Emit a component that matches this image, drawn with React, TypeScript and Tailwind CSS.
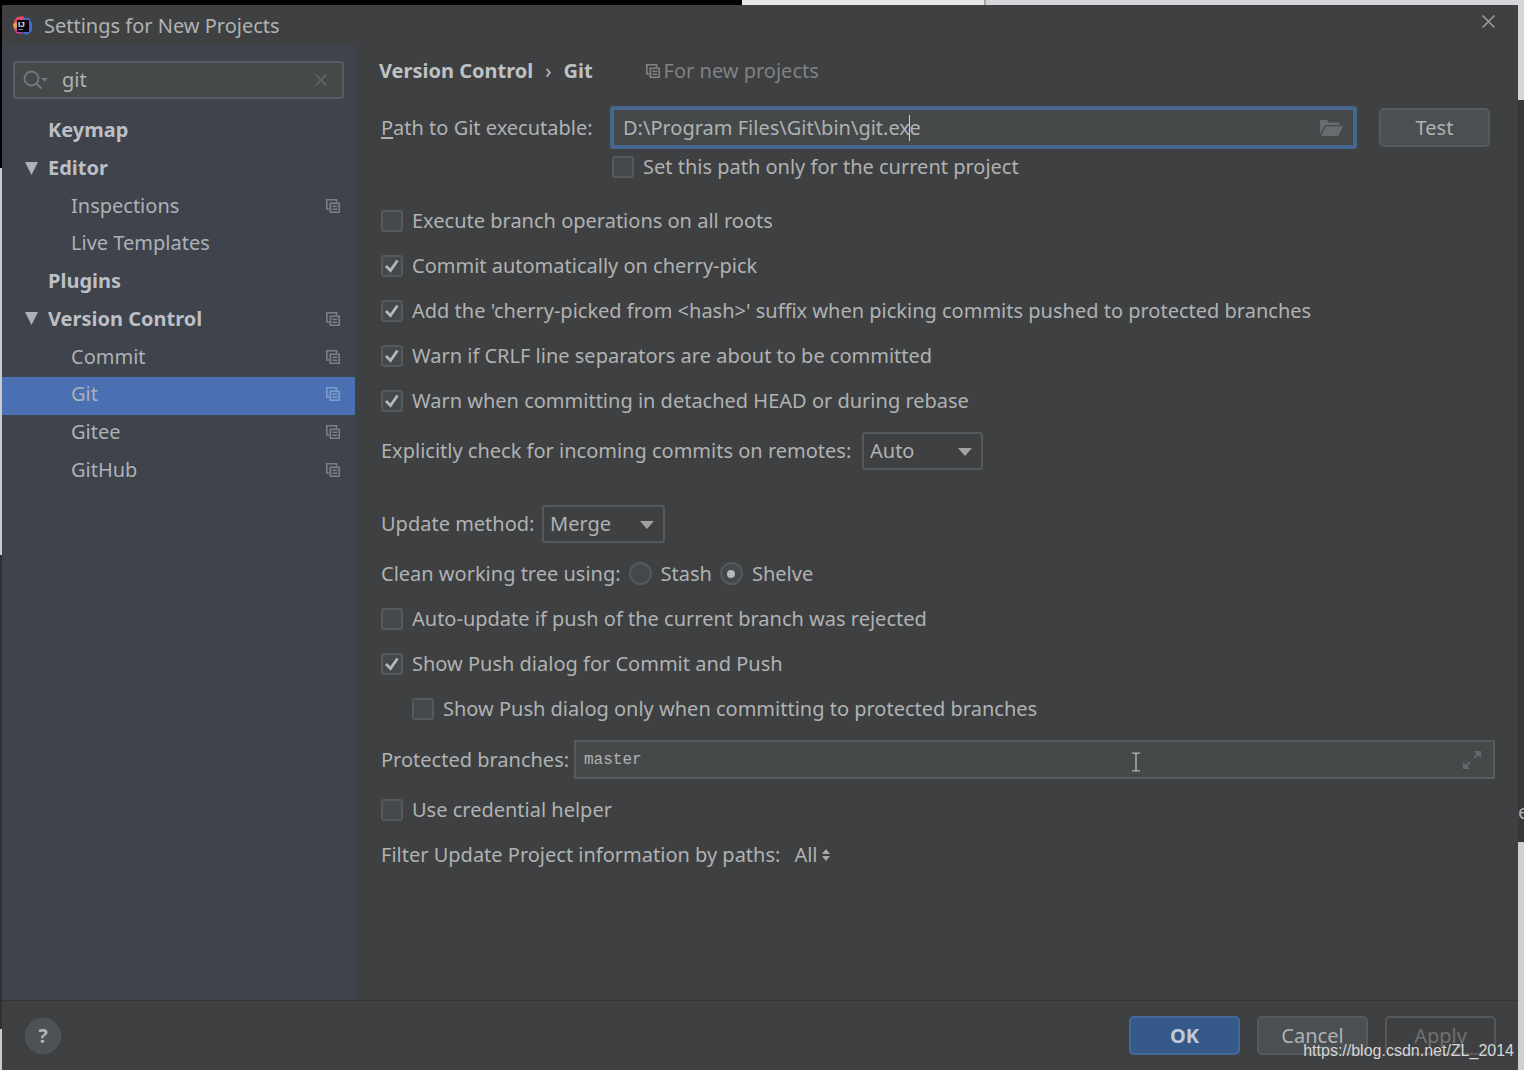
import { useState } from 'react';
import type { ReactNode } from 'react';

type TreeNode = {
  label: string;
  level: 0 | 1;
  open?: boolean;
  projectLevel?: boolean;
};

const tree: TreeNode[] = [
  { label: 'Keymap', level: 0 },
  { label: 'Editor', level: 0, open: true },
  { label: 'Inspections', level: 1, projectLevel: true },
  { label: 'Live Templates', level: 1 },
  { label: 'Plugins', level: 0 },
  { label: 'Version Control', level: 0, open: true, projectLevel: true },
  { label: 'Commit', level: 1, projectLevel: true },
  { label: 'Git', level: 1, projectLevel: true },
  { label: 'Gitee', level: 1, projectLevel: true },
  { label: 'GitHub', level: 1, projectLevel: true },
];

function CopyIcon({ className = '' }: { className?: string }) {
  return (
    <svg width="14" height="14" viewBox="0 0 14 14" fill="none" stroke="currentColor" strokeWidth="1.6" className={`shrink-0 ${className}`}>
      <path d="M3.500 10H.8V.8H10.500V3.500" />
      <path d="M4.300 4.300H13.200V13.200H4.300z" />
      <path d="M6.300 7.300h5M6.300 10.300h5" strokeWidth="1.500" />
    </svg>
  );
}

function Logo() {
  return (
    <svg width="20" height="20" viewBox="0 0 20 20" className="shrink-0">
      <path d="M1 5 4 1 10 0 13 4 6 11 1 9z" fill="#d94a66" />
      <path d="M0 8 3 6 6 13 1 13z" fill="#e8a04a" />
      <path d="M1 13 5 11 9 18 3 17z" fill="#c9458f" />
      <path d="M11 2 16 2 19 7 19 15 14 19 9 17z" fill="#4466cf" />
      <path d="M4 4h12v12H4z" fill="#08080c" />
      <text x="5" y="11" fontSize="8" fontWeight="700" fill="#e6e6e6" fontFamily="Liberation Sans, sans-serif">IJ</text>
      <path d="M6 13.500h4" stroke="#888" strokeWidth="1" />
    </svg>
  );
}

function CheckRow({ label, checked = false, className = '' }: { label: string; checked?: boolean; className?: string }) {
  const [on, setOn] = useState(checked);
  return (
    <label className={`flex items-center gap-[9px] ${className}`}>
      <span className="relative flex h-[22px] w-[22px] shrink-0">
        <input
          type="checkbox"
          checked={on}
          onChange={e => setOn(e.target.checked)}
          className="h-full w-full appearance-none rounded-[3px] border-2 border-[#56595b] bg-[#43484a]"
        />
        {on && (
          <svg viewBox="0 0 22 22" className="pointer-events-none absolute inset-0" fill="none" stroke="#b4b6b8" strokeWidth="2.8">
            <path d="M5 11l4.500 4.500L16.500 5.500" />
          </svg>
        )}
      </span>
      {label}
    </label>
  );
}

function RadioOption({ label, checked, onSelect }: { label: string; checked: boolean; onSelect: () => void }) {
  return (
    <label className="flex items-center gap-[9px]">
      <span className="relative flex h-[23px] w-[23px] shrink-0 items-center justify-center">
        <input
          type="radio"
          name="clean-tree"
          checked={checked}
          onChange={onSelect}
          className="h-full w-full appearance-none rounded-full border-2 border-[#56595b] bg-[#43484a]"
        />
        {checked && <span className="pointer-events-none absolute h-2 w-2 rounded-full bg-[#b4b6b8]" />}
      </span>
      {label}
    </label>
  );
}

function Dropdown({ id, options, className }: { id: string; options: string[]; className: string }) {
  return (
    <div className={`relative h-[38px] ${className}`}>
      <select id={id} className="h-full w-full appearance-none rounded-[3px] border-2 border-[#56595b] bg-[#3e4042] pl-[6px] outline-none">
        {options.map(o => <option key={o}>{o}</option>)}
      </select>
      <svg width="14" height="8" viewBox="0 0 14 8" className="pointer-events-none absolute right-[11px] top-4" fill="#9fa1a3">
        <path d="M0 0h14L7 8z" />
      </svg>
    </div>
  );
}

function DialogButton({ children, className = '', disabled = false }: { children: ReactNode; className?: string; disabled?: boolean }) {
  return (
    <button type="button" disabled={disabled} className={`h-[39px] w-[111px] shrink-0 rounded-[5px] border-2 ${className}`}>
      {children}
    </button>
  );
}

function Sidebar() {
  const [query, setQuery] = useState('git');
  const [selected, setSelected] = useState('Git');

  return (
    <aside className="w-[353px] shrink-0 bg-[#3e434c] pt-[15px]">
      <div className="ml-[11px] mr-[11px] flex h-[38px] items-center rounded-[3px] border-2 border-[#575c60] bg-[#45494a] pl-2 pr-[15px]">
        <svg width="26" height="20" viewBox="0 0 26 20" fill="none" stroke="#73787a" strokeWidth="1.8" className="shrink-0">
          <circle cx="8.500" cy="8.500" r="7" />
          <path d="M13.500 13.500l5 5" />
          <path d="M18 8h7l-3.500 4z" fill="#73787a" stroke="none" />
        </svg>
        <input
          type="text"
          aria-label="Search settings"
          value={query}
          onChange={e => setQuery(e.target.value)}
          className="ml-[13px] min-w-0 flex-1 bg-transparent outline-none"
        />
        <button type="button" aria-label="Clear search" onClick={() => setQuery('')}>
          <svg width="12" height="12" viewBox="0 0 12 12" stroke="#63686a" strokeWidth="1.5">
            <path d="M.5.5l11 11M11.500.5l-11 11" />
          </svg>
        </button>
      </div>

      <nav className="mt-[14px] grid h-[377px] grid-rows-10">
        {tree.map(node => (
          <button
            key={node.label}
            type="button"
            onClick={() => setSelected(node.label)}
            className={`flex min-h-0 items-center pb-[3px] pr-[15px] text-left ${node.label === selected ? 'bg-[#4a6fb2]' : ''}`}
          >
            <span className={`flex shrink-0 pl-[23px] ${node.level === 0 ? 'w-[46px]' : 'w-[69px]'}`}>
              {node.open && (
                <svg width="13" height="13" viewBox="0 0 13 13" fill="#adb0b6">
                  <path d="M0 0h13L6.500 13z" />
                </svg>
              )}
            </span>
            <span className={`flex-1 ${node.level === 0 ? 'font-bold text-[#bcbfc4]' : 'text-[#aeb1b6]'}`}>{node.label}</span>
            {node.projectLevel && <CopyIcon className={node.label === selected ? 'text-[#7f9bcb]' : 'text-[#7b7f87]'} />}
          </button>
        ))}
      </nav>
    </aside>
  );
}

function GitSettings() {
  const [path, setPath] = useState('D:\\Program Files\\Git\\bin\\git.exe');
  const [branches, setBranches] = useState('master');
  const [cleanMode, setCleanMode] = useState('Shelve');

  return (
    <main className="min-w-0 flex-1 pr-[23px]">
      <div className="flex h-[50px] items-center pl-6">
        <h1 className="flex items-center font-bold text-[#bfc1c2]">
          Version Control
          <span className="mx-3 font-normal">›</span>
          Git
        </h1>
        <span className="ml-[53px] flex items-center gap-1 text-[#808284]">
          <CopyIcon />
          For new projects
        </span>
      </div>

      <div className="pl-[26px]">
        <div className="mt-[10px] flex h-[43px] items-center pr-[5px]">
          <label htmlFor="git-path" className="w-[229px] shrink-0"><u className="underline-offset-2">P</u>ath to Git executable:</label>
          <div className="relative flex h-full flex-1 items-center rounded-[3px] border-4 border-[#46658f] bg-[#45494a] pl-[9px] pr-[10px]">
            <input
              id="git-path"
              type="text"
              value={path}
              onChange={e => setPath(e.target.value)}
              className="min-w-0 flex-1 bg-transparent outline-none"
            />
            {/* text caret, placed before the last character */}
            <span className="pointer-events-none absolute inset-y-0 left-[8px] flex items-center" aria-hidden="true">
              <span className="invisible">{path.slice(0, -1)}</span>
              <span className="h-[26px] w-px bg-[#d0d2d3]" />
            </span>
            <button type="button" aria-label="Browse">
              <svg width="23" height="18" viewBox="0 0 23 18" fill="#676c6e">
                <path d="M0 15V1h7l2 2.500h10.500V6H5z" />
                <path d="M5.800 7.200H23L18.500 17H1z" />
              </svg>
            </button>
          </div>
          <DialogButton className="ml-[22px] border-[#565b5d] bg-[#4b4f52]">Test</DialogButton>
        </div>
        <CheckRow label="Set this path only for the current project" className="ml-[231px] h-9" />

        <div className="mt-[13px]">
          <CheckRow label="Execute branch operations on all roots" className="h-[45px]" />
          <CheckRow label="Commit automatically on cherry-pick" checked className="h-[45px]" />
          <CheckRow label="Add the 'cherry-picked from <hash>' suffix when picking commits pushed to protected branches" checked className="h-[45px]" />
          <CheckRow label="Warn if CRLF line separators are about to be committed" checked className="h-[45px]" />
          <CheckRow label="Warn when committing in detached HEAD or during rebase" checked className="h-[45px]" />
        </div>

        <div className="mt-[9px] flex items-center">
          <label htmlFor="incoming" className="w-[481px]">Explicitly check for incoming commits on remotes:</label>
          <Dropdown id="incoming" options={['Auto', 'Always', 'Never']} className="w-[121px]" />
        </div>

        <div className="mt-[35px] flex items-center">
          <label htmlFor="update-method" className="w-[161px]">Update method:</label>
          <Dropdown id="update-method" options={['Merge', 'Rebase']} className="w-[123px]" />
        </div>

        <div className="mt-2 flex h-[45px] items-center gap-2" role="radiogroup" aria-labelledby="clean-label">
          <span id="clean-label">Clean working tree using:</span>
          <RadioOption label="Stash" checked={cleanMode === 'Stash'} onSelect={() => setCleanMode('Stash')} />
          <RadioOption label="Shelve" checked={cleanMode === 'Shelve'} onSelect={() => setCleanMode('Shelve')} />
        </div>
        <CheckRow label="Auto-update if push of the current branch was rejected" className="h-[45px]" />
        <CheckRow label="Show Push dialog for Commit and Push" checked className="h-[45px]" />
        <CheckRow label="Show Push dialog only when committing to protected branches" className="ml-[31px] h-[45px]" />

        <div className="mt-[9px] flex h-[39px] items-center">
          <label htmlFor="branches" className="w-[193px] shrink-0">Protected branches:</label>
          <div className="relative flex h-full flex-1 items-center border-2 border-[#585b5d] bg-[#45494a] pl-2 pr-[11px]">
            <input
              id="branches"
              type="text"
              value={branches}
              onChange={e => setBranches(e.target.value)}
              className="min-w-0 flex-1 bg-transparent font-['Liberation_Mono',monospace] text-[16px] outline-none"
            />
            <button type="button" aria-label="Expand">
              <svg width="20" height="20" viewBox="0 0 20 20" fill="none" stroke="#66696b" strokeWidth="1.800">
                <path d="M12 8l5-5M8 12l-5 5" />
                <path d="M12 1h7v7zM1 12v7h7z" fill="#66696b" stroke="none" />
              </svg>
            </button>
            {/* mouse pointer */}
            <svg width="10" height="20" viewBox="0 0 10 20" fill="none" stroke="#c4c6c7" strokeWidth="1.200" className="pointer-events-none absolute right-[352px] top-[10px]">
              <path d="M1 1h3l1 1 1-1h3M5 2v16M1 19h3l1-1 1 1h3" />
            </svg>
          </div>
        </div>

        <CheckRow label="Use credential helper" className="mt-2 h-[45px]" />

        <div className="flex h-[45px] items-center gap-[14px]">
          <span>Filter Update Project information by paths:</span>
          <button type="button" className="flex items-center gap-1">
            All
            <svg width="8" height="12" viewBox="0 0 8 12" fill="#a9abad">
              <path d="M0 5l4-5 4 5zM0 7h8l-4 5z" />
            </svg>
          </button>
        </div>
      </div>
    </main>
  );
}

export default function App() {
  return (
    <div className="relative flex min-h-screen flex-col overflow-hidden font-['Noto_Sans','Open_Sans',sans-serif] text-[20px] leading-7 text-[#b0b2b3]">
      {/* desktop showing above the dialog */}
      <div className="flex h-[5px] shrink-0">
        <div className="w-[742px] bg-black" />
        <div className="w-[242px] bg-[#e6e8e7]" />
        <div className="flex-1 border-l-2 border-[#a5a5a9] bg-[#d6d5da]" />
      </div>

      <div className="flex flex-1">
        <div className="flex w-[2px] shrink-0 flex-col">
          <div className="h-[163px] bg-black" />
          <div className="h-[387px] bg-[#c9cbcc]" />
          <div className="flex-1 bg-[#2f3031]" />
          <div className="h-[41px] bg-[#c9cbcc]" />
        </div>

        <div className="flex min-w-0 flex-1 flex-col bg-[#3e4042]">
          <header className="flex h-[41px] items-center pl-[11px] pr-[23px]">
            <Logo />
            <span className="ml-[11px] flex-1">Settings for New Projects</span>
            <button type="button" aria-label="Close" className="pb-2">
              <svg width="13" height="13" viewBox="0 0 13 13" stroke="#9c9ea0" strokeWidth="1.500">
                <path d="M.5.5l12 12M12.500.5l-12 12" />
              </svg>
            </button>
          </header>

          <div className="flex flex-1">
            <Sidebar />
            <GitSettings />
          </div>

          <footer className="flex h-[70px] items-center gap-[17px] border-t border-[#323537] pl-[23px] pr-[22px]">
            <button type="button" aria-label="Help" className="h-9 w-9 rounded-full border border-[#565b5d] bg-[#4d5255] font-bold">?</button>
            <div className="flex-1" />
            <DialogButton className="border-[#43699b] bg-[#355a8a] font-bold text-[#c2cad4]">OK</DialogButton>
            <DialogButton className="border-[#565b5d] bg-[#4b4f52]">Cancel</DialogButton>
            <DialogButton disabled className="border-[#56595b] text-[#6f7173]">Apply</DialogButton>
          </footer>
        </div>

        <div className="flex w-[6px] shrink-0 flex-col overflow-hidden">
          <div className="h-[95px] bg-[#d6d5da]" />
          <div className="flex flex-1 items-end bg-[#383735] pb-4">e</div>
          <div className="h-[228px] bg-[#cfcfcf]" />
        </div>
      </div>

      <span className="absolute bottom-[7px] right-[10px] font-['Liberation_Sans',Arial,sans-serif] text-[16px] leading-6 text-[#d4d6d7]">
        https://blog.csdn.net/ZL_2014
      </span>
    </div>
  );
}
